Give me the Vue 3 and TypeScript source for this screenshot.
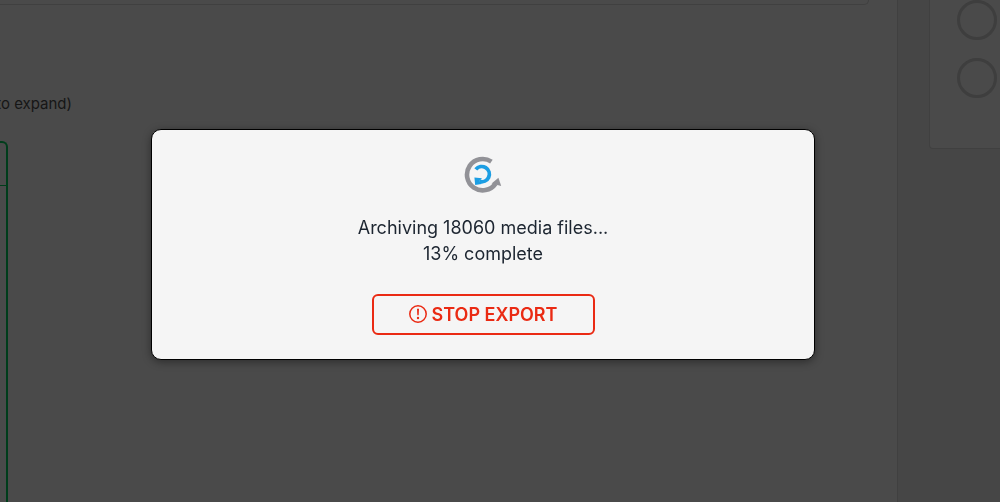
<script setup lang="ts">
import { ref } from 'vue'

const total = ref<number>(18060)
const percent = ref<number>(13)
const running = ref<boolean>(true)
const markers: number[] = [1, 2]

function stopExport(): void {
  running.value = false
}
</script>

<template>
  <div class="page">
    <main class="content">
      <section class="panel"></section>
      <p class="hint">to expand)</p>
      <section class="selected">
        <header class="selected-head"></header>
      </section>
    </main>
    <aside class="side">
      <div class="side-card">
        <span v-for="m in markers" :key="m" class="marker"></span>
      </div>
    </aside>

    <div v-if="running" class="overlay">
      <div class="dialog" role="dialog" aria-modal="true" aria-labelledby="status">
        <svg class="logo" viewBox="1 1 40 40" aria-hidden="true">
          <path d="M29.4 6.6A15.7 15.7 0 1 0 33.6 28.6" fill="none" stroke="#929297" stroke-width="4.6" />
          <path d="M36.4 22.8L39.2 31L29.6 28.4Z" fill="#929297" />
          <path d="M13.8 14.4A7.6 7.6 0 1 1 17.4 26.4" fill="none" stroke="#1c9ee3" stroke-width="3.8" />
          <path d="M12.4 22.6L20 23.2L17.4 26L19.6 29L13.2 30Z" fill="#1c9ee3" />
        </svg>
        <p id="status" class="status">
          Archiving {{ total }} media files...<br />{{ percent }}% complete
        </p>
        <button type="button" class="stop" @click="stopExport">
          <svg class="alert" viewBox="0 0 18 18" aria-hidden="true">
            <circle cx="9" cy="9" r="8.2" fill="none" stroke="currentColor" stroke-width="1.5" />
            <path d="M8 3.8h2l-.3 6.4H8.3z" fill="currentColor" />
            <circle cx="9" cy="13" r="1.2" fill="currentColor" />
          </svg>
          <span class="stop-label">STOP EXPORT</span>
        </button>
      </div>
    </div>
  </div>
</template>

<style>
body {
  margin: 0;
  background: #464646;
}
</style>

<style scoped>
.page {
  display: flex;
  min-height: 100vh;
  overflow: hidden;
  font-family: Inter, "Liberation Sans", sans-serif;
  background: #464646;
}
.content {
  box-sizing: border-box;
  flex: 1;
  display: flex;
  flex-direction: column;
  background: #4a4a4a;
  border-right: 1px solid #404040;
}
.panel {
  height: 4px;
  margin-right: 28px;
  border: solid #404040;
  border-width: 0 1px 1px 0;
  border-radius: 0 0 6px 0;
}
.hint {
  display: flex;
  justify-content: flex-end;
  width: 72px;
  margin: 88px 0 0;
  overflow: hidden;
  font-size: 15px;
  line-height: 22px;
  white-space: nowrap;
  color: #161616;
}
.selected {
  box-sizing: border-box;
  flex: 1;
  width: 8px;
  margin-top: 26px;
  border: solid #003d1b;
  border-width: 2px 2px 0 0;
  border-radius: 0 6px 0 0;
}
.selected-head {
  height: 42px;
  border-bottom: 1px solid #003d1b;
}
.side {
  box-sizing: border-box;
  width: 102px;
  padding-left: 31px;
}
.side-card {
  box-sizing: border-box;
  display: flex;
  flex-direction: column;
  gap: 18px;
  padding: 0 0 50px 27px;
  background: #4a4a4a;
  border: solid #404040;
  border-width: 0 0 1px 1px;
  border-radius: 0 0 0 4px;
}
.marker {
  box-sizing: border-box;
  width: 40px;
  height: 40px;
  border: 3px solid #3e3e3e;
  border-radius: 50%;
}
.overlay {
  position: fixed;
  inset: 0;
  box-sizing: border-box;
  display: flex;
  align-items: center;
  justify-content: center;
  padding: 0 34px 14px 0;
}
.dialog {
  box-sizing: border-box;
  display: flex;
  flex-direction: column;
  align-items: center;
  width: 69%;
  max-width: 664px;
  padding: 26px 24px 24px;
  background: #f5f5f5;
  border: 1px solid #000;
  border-radius: 10px;
  box-shadow: 0 2px 8px rgba(0, 0, 0, 0.4);
}
.logo {
  width: 40px;
  height: 40px;
}
.status {
  margin: 19px 0 27px;
  font-size: 18px;
  line-height: 26px;
  text-align: center;
  color: #1c2530;
}
.stop {
  box-sizing: border-box;
  display: flex;
  align-items: center;
  justify-content: center;
  gap: 5px;
  min-width: 223px;
  height: 41px;
  padding: 0 24px;
  font-family: inherit;
  font-size: 18px;
  font-weight: 600;
  line-height: 26px;
  color: #ea2a13;
  background: transparent;
  border: 2px solid #ea2a13;
  border-radius: 6px;
  cursor: pointer;
}
.stop-label {
  padding-top: 2px;
}
.alert {
  width: 18px;
  height: 18px;
}
</style>
